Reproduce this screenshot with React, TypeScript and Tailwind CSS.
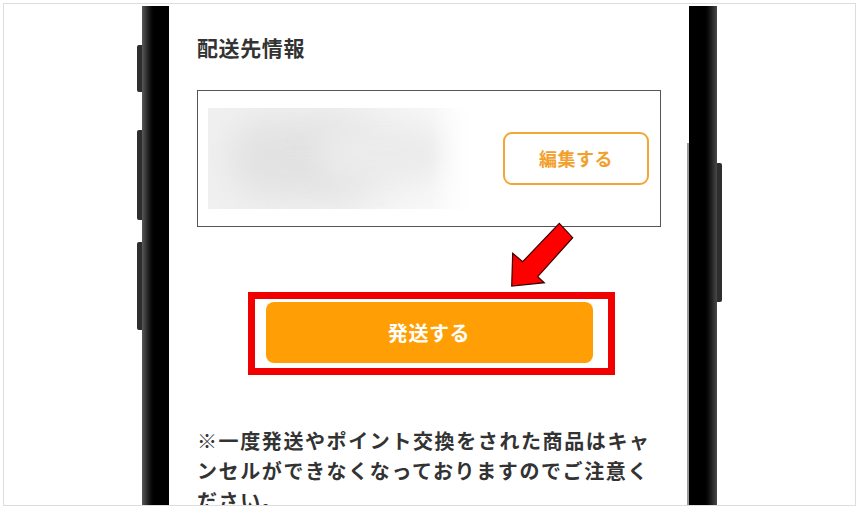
import React from "react";

const jp = "font-['Noto_Sans_CJK_JP','Noto_Sans',sans-serif]";

export default function App() {
  return (
    <div className={`w-[859px] h-[509px] bg-white p-[3px] ${jp}`}>
      <div className="h-full border border-[#dddddd] overflow-hidden flex justify-center pt-[2px]">
        <Phone />
      </div>
    </div>
  );
}

function Phone() {
  return (
    <div className="flex h-[520px]">
      {/* left side keys */}
      <div className="w-[5px] flex flex-col pt-[39px]">
        <div className="h-[47px] rounded-l-[2px] bg-[#2e2e2e]" />
        <div className="h-[90px] mt-[38px] rounded-l-[2px] bg-[#2e2e2e]" />
        <div className="h-[88px] mt-[22px] rounded-l-[2px] bg-[#2e2e2e]" />
      </div>

      {/* left bezel */}
      <div className="w-[27px] bg-gradient-to-r from-[#5a5a5a] via-black to-black" />

      {/* screen */}
      <div className="w-[518px] bg-white pl-[28px] pr-[26px] pt-[26px]">
        <h2 className="text-[21px] leading-[30px] font-bold tracking-[0.6px] text-[#333333]">
          配送先情報
        </h2>

        {/* address card */}
        <div className="mt-[28px] h-[137px] border border-[#555555] flex items-center justify-between pl-[10px] pr-[11px]">
          <BlurredAddress />
          <button className="w-[146px] h-[53px] rounded-[9px] border-2 border-[#f2a634] text-[#f2a02c] text-[18px] font-bold tracking-[0.5px]">
            編集する
          </button>
        </div>

        {/* submit */}
        <div className="mt-[75px] flex justify-center">
          <div className="relative">
            <button className="w-[327px] h-[61px] rounded-[8px] bg-[#ff9f05] text-white text-[20px] font-bold tracking-[0.6px]">
              発送する
            </button>
            {/* annotation */}
            <div className="absolute -left-[18px] -top-[10px] -right-[22px] -bottom-[12px] border-[7px] border-[#f10000] pointer-events-none" />
            <Arrow />
          </div>
        </div>

        <p className="mt-[63px] text-[20px] leading-[30px] font-bold tracking-[1.6px] text-[#333333]">
          ※一度発送やポイント交換をされた商品はキャンセルができなくなっておりますのでご注意ください。
        </p>
      </div>

      {/* right bezel with inner edge line */}
      <div className="flex">
        <div className="w-[2px] flex flex-col">
          <div className="h-[137px] bg-white" />
          <div className="flex-1 bg-[#9a9a9a]" />
        </div>
        <div className="w-[28px] bg-gradient-to-r from-black via-black to-[#4a4a4a]" />
      </div>

      {/* right side key */}
      <div className="w-[5px] pt-[157px]">
        <div className="h-[139px] rounded-r-[2px] bg-[#2e2e2e]" />
      </div>
    </div>
  );
}

function BlurredAddress() {
  return (
    <div className="relative w-[263px] h-[101px] overflow-hidden bg-gradient-to-r from-[#f0f0f0] via-[#f1f1f1] to-[#fbfbfb]">
      <div className="absolute left-[20px] top-[10px] w-[150px] h-[80px] rounded-full bg-[#e2e2e2] blur-[16px]" />
      <div className="absolute left-[110px] top-[15px] w-[130px] h-[60px] rounded-full bg-[#ebebeb] blur-[14px]" />
      <div className="absolute right-0 top-0 w-[40px] h-full bg-gradient-to-r from-transparent to-white" />
    </div>
  );
}

function Arrow() {
  return (
    <svg
      className="absolute left-[243px] -top-[82px]"
      width="66"
      height="68"
      viewBox="0 0 66 68"
    >
      <polygon
        points="50.3,3.3 63.7,17.7 28.7,56.7 35.3,62.7 2.7,66 3.7,33.3 13.7,41.7"
        fill="#ff0000"
        stroke="#3a0000"
        strokeWidth="1.2"
        strokeLinejoin="miter"
      />
    </svg>
  );
}
